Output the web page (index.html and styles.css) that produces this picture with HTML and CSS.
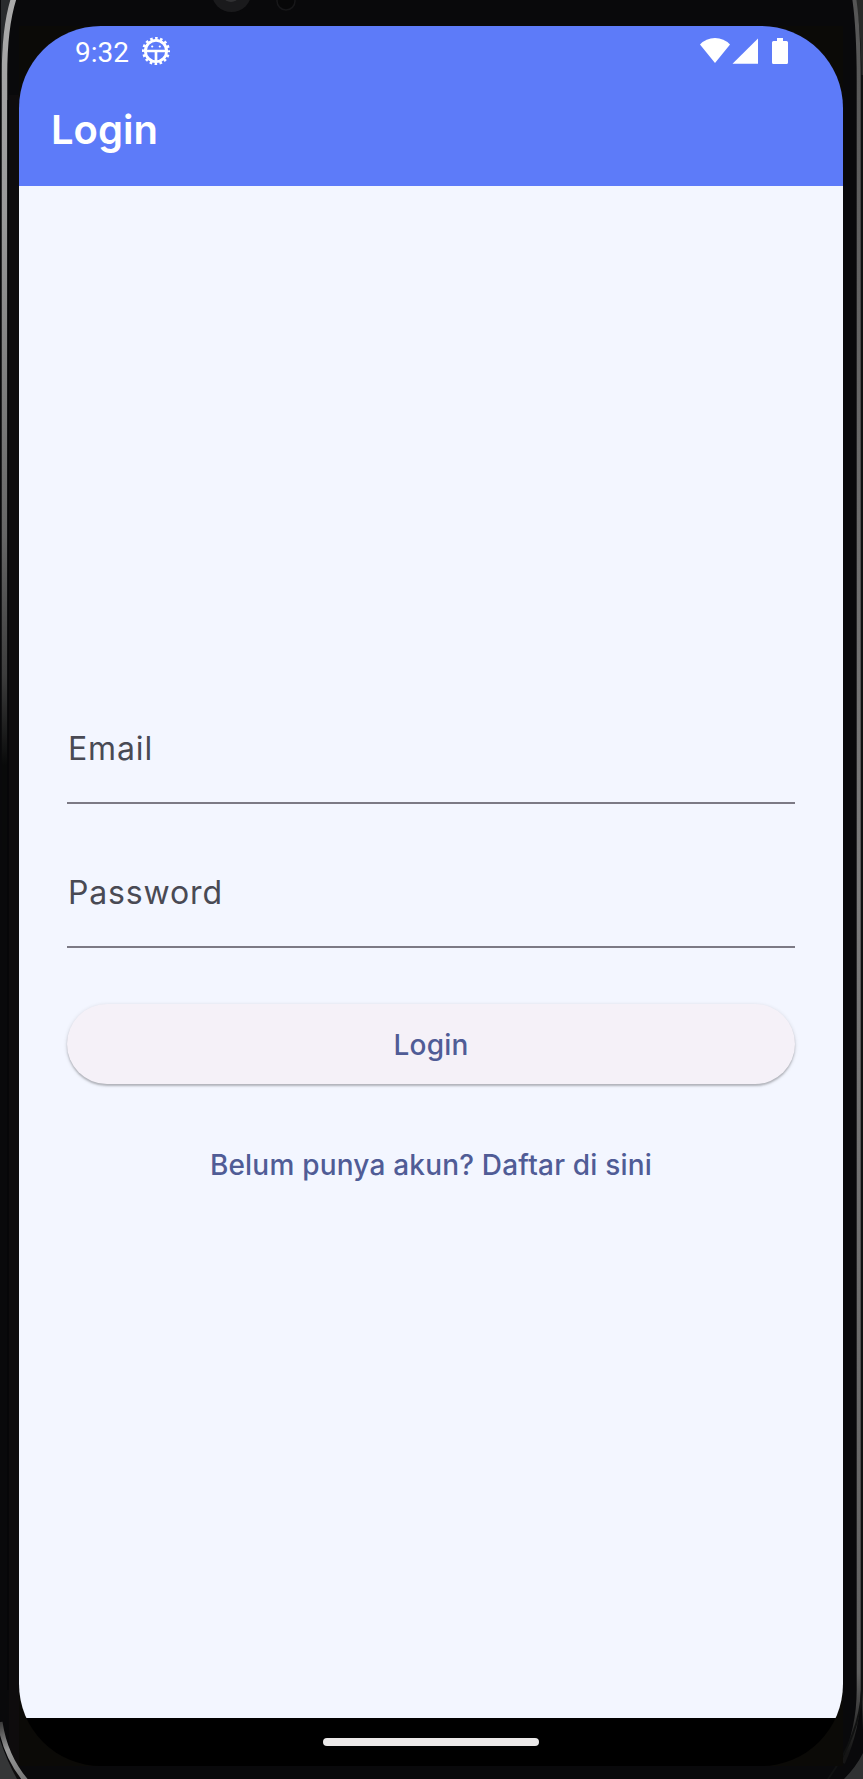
FILE: index.html
```html
<!DOCTYPE html>
<html lang="id">
<head>
<meta charset="utf-8">
<title>Login</title>
<link rel="stylesheet" href="styles.css">
</head>
<body>
<div class="device">
  <svg class="frame" viewBox="0 0 863 1779" aria-hidden="true">
    <defs>
      <linearGradient id="railLeft" gradientUnits="userSpaceOnUse" x1="0" y1="0" x2="0" y2="1779">
        <stop offset="0" stop-color="#aaa"/><stop offset=".12" stop-color="#999"/><stop offset=".3" stop-color="#666"/><stop offset=".38" stop-color="#3c3c3c"/><stop offset=".43" stop-color="#090a0a"/><stop offset="1" stop-color="#090a0a"/>
      </linearGradient>
      <linearGradient id="railRight" gradientUnits="userSpaceOnUse" x1="0" y1="0" x2="0" y2="1779">
        <stop offset="0" stop-color="#555"/><stop offset=".5" stop-color="#7b7b7b"/><stop offset=".94" stop-color="#606060"/><stop offset=".985" stop-color="#151515"/>
      </linearGradient>
      <linearGradient id="cornerShine" gradientUnits="userSpaceOnUse" x1="0" y1="1715" x2="28" y2="1779">
        <stop offset="0" stop-color="#222"/><stop offset=".5" stop-color="#999"/><stop offset="1" stop-color="#777"/>
      </linearGradient>
    </defs>
    <rect width="863" height="1779" fill="#09090b"/>
    <path d="M9 95V1779H19V95Z" fill="#0e0c0d"/>
    <path d="M0 0H13Q1 28 1 90V0Z" fill="#292b2d"/>
    <path d="M14.500 -4Q4.500 25 4.500 75V850" fill="none" stroke="url(#railLeft)" stroke-width="5.500"/>
    <path d="M8 100V1690" stroke="#050506" stroke-width="1"/>
    <path d="M854 0Q861 18 861.500 80V1700L863 1730V0Z" fill="#292a29"/>
    <path d="M854 -3Q858.700 28 858.700 80V1690Q858.700 1728 843 1763" fill="none" stroke="url(#railRight)" stroke-width="4"/>
    <path d="M862 75V1690Q860 1735 828 1779" fill="none" stroke="#101111" stroke-width="2"/>
    <path d="M0 1740Q7 1761 17 1779H0Z" fill="#353637"/>
    <path d="M0 1722Q5 1756 26 1781" fill="none" stroke="url(#cornerShine)" stroke-width="5"/>
    <path d="M863 1753Q856 1767 844 1779H863Z" fill="#303132"/>
    <path d="M19 26H843V1766H19Z" fill="#0b0a07"/>
    <circle cx="231.500" cy="-8" r="20" fill="#1a1a1c"/>
    <ellipse cx="231" cy="-3" rx="7" ry="5" fill="#303032"/>
    <circle cx="286" cy="1" r="9" fill="#070708" stroke="#171719" stroke-width="1.500"/>
  </svg>
  <main class="screen">
    <header class="header">
      <div class="status">
        <span class="time">9:32</span>
        <svg class="debug" viewBox="-15 -15 30 30" aria-hidden="true">
          <circle r="12.300" fill="none" stroke="#fff" stroke-width="3.400" stroke-dasharray="2.500 2.330" stroke-dashoffset="1.250"/>
          <circle r="10.600" fill="none" stroke="#fff" stroke-width="2.800"/>
          <path d="M-10 0H10M0 0V10" fill="none" stroke="#fff" stroke-width="2.700"/>
          <circle cx="-3.800" cy="-4.500" r="1.100" fill="#fff"/><circle cx="3.800" cy="-4.500" r="1.100" fill="#fff"/>
        </svg>
        <svg class="signals" viewBox="0 0 90 30" aria-hidden="true">
          <path d="M0 8.500Q6 2 15 2T30 8.500L15 27Z" fill="#fff"/>
          <path d="M58 2.500V27.700H32.500Z" fill="#fff"/>
          <path d="M77 2H83V5H86.500Q88 5 88 6.500V26.500Q88 28 86.500 28H73.500Q72 28 72 26.500V6.500Q72 5 73.500 5H77Z" fill="#fff"/>
        </svg>
      </div>
      <h1 class="title">Login</h1>
    </header>
    <form class="form">
      <label class="field">Email</label>
      <label class="field">Password</label>
      <button class="submit" type="button">Login</button>
      <a class="register">Belum punya akun? Daftar di sini</a>
    </form>
    <footer class="navbar"><span class="handle"></span></footer>
  </main>
</div>
</body>
</html>
```
FILE: styles.css
```css
* { box-sizing: border-box; }
body { margin: 0; background: #09090b; font-family: Inter, sans-serif; }
.device { position: relative; width: 863px; height: 1779px; padding: 26px 20px 13px 19px; overflow: hidden; }
.frame { position: absolute; inset: 0; width: 863px; height: 1779px; }
.screen { position: relative; display: flex; flex-direction: column; width: 824px; height: 1740px; border-radius: 82px; overflow: hidden; }
.header { height: 160px; background: #5d7bf9; color: #fff; }
.status { display: flex; align-items: center; height: 52px; padding: 0 53px 0 56px; }
.time { margin-top: 1px; font: 400 28px/32px Roboto, sans-serif; }
.debug { width: 30px; height: 30px; margin: -2px 0 0 12px; }
.signals { width: 90px; height: 30px; margin-left: auto; margin-top: -2px; }
.title { margin: 27px 0 0 32px; font-size: 40px; line-height: 50px; font-weight: 600; }
.form { flex: 1; display: flex; flex-direction: column; padding: 506px 48px 0; background: #f3f6ff; }
.field { height: 112px; margin-bottom: 32px; padding: 37px 0 0 1px; border-bottom: 2px solid #7c7a85; color: #494a54; font-size: 32px; line-height: 40px; letter-spacing: .85px; }
.submit { height: 80px; margin-top: 24px; padding: 2px 0 0; border: 0; border-radius: 40px; background: #f5f1f8; box-shadow: 0 2px 2px rgba(0,0,0,.2), 0 1px 4px rgba(0,0,0,.14); color: #505c96; font: 500 28px/40px Inter, sans-serif; letter-spacing: .2px; }
.register { margin-top: 61px; color: #505c96; text-align: center; font-size: 28px; line-height: 40px; font-weight: 500; letter-spacing: .2px; }
.navbar { display: flex; justify-content: center; height: 48px; padding-top: 20px; background: #000; }
.handle { width: 216px; height: 8px; border-radius: 4px; background: #ebe9e9; }
```
